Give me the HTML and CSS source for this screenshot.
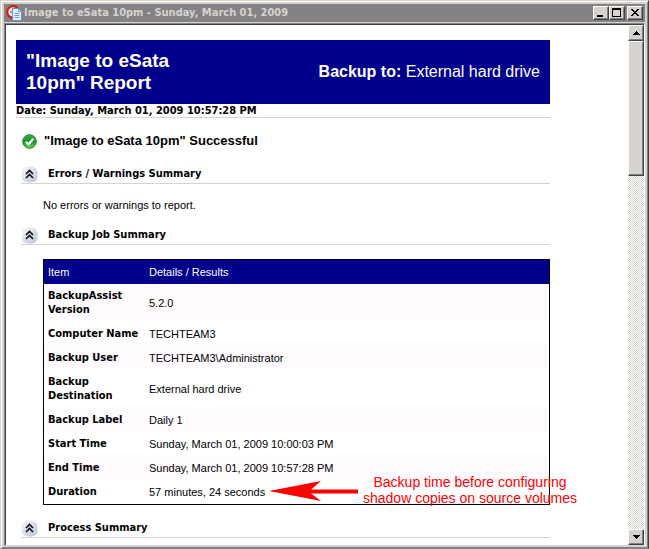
FILE: index.html
```html
<!DOCTYPE html>
<html lang="en">
<head>
<meta charset="utf-8">
<title>Image to eSata 10pm - Sunday, March 01, 2009</title>
<link rel="stylesheet" href="styles.css">
</head>
<body>
<svg class="defs" aria-hidden="true">
  <defs>
    <linearGradient id="disc" x1="0" y1="0" x2="1" y2="1">
      <stop offset="0" stop-color="#fafbfd"/>
      <stop offset="1" stop-color="#b9c0d8"/>
    </linearGradient>
    <linearGradient id="green" x1="0" y1="0" x2="0" y2="1">
      <stop offset="0" stop-color="#3dad45"/>
      <stop offset=".5" stop-color="#18942a"/>
      <stop offset="1" stop-color="#6fd84f"/>
    </linearGradient>
    <symbol id="collapse" viewBox="0 0 17 17">
      <rect x="0.5" y="0.5" width="16" height="16" rx="6" fill="url(#disc)"/>
      <path d="M5 8 8.500 4.500 12 8M5 12 8.500 8.500 12 12" fill="none" stroke="#111" stroke-width="1.600"/>
    </symbol>
  </defs>
</svg>
<div class="window">
  <header class="titlebar">
    <svg class="app-icon" viewBox="0 0 16 16" aria-hidden="true">
      <circle cx="7" cy="7" r="5.8" fill="#f6e9e7" stroke="#d31c12" stroke-width="2.2"/>
      <path d="M7 3v4H4" fill="none" stroke="#d33" stroke-width="1.2"/>
      <path d="M6.5 3.5h6l3 3v9h-9z" fill="#e6f1ff" stroke="#5d8fd6"/>
      <path d="M12.500 3.500v3h3M8.500 8.500h5M8.500 10.500h5M8.500 12.500h5" fill="none" stroke="#6f9de0"/>
    </svg>
    <h1 class="caption">Image to eSata 10pm - Sunday, March 01, 2009</h1>
    <div class="controls">
      <button class="bevel control" aria-label="Minimize"><svg viewBox="0 0 12 10"><path d="M2 7h6v2H2z"/></svg></button>
      <button class="bevel control" aria-label="Maximize"><svg viewBox="0 0 12 10"><path d="M1 0h9v9H1zM2 2v6h7V2z" fill-rule="evenodd"/></svg></button>
      <button class="bevel control close" aria-label="Close"><svg viewBox="0 0 12 10"><path d="M2 1h2v1h1v1h2V2h1V1h2v1H9v1H8v1H7v1h1v1h1v1h1v1H8V7H7V6H5v1H4v1H2V7h1V6h1V5h1V4H4V3H3V2H2z"/></svg></button>
    </div>
  </header>
  <div class="viewport">
    <main class="report">
      <div class="banner">
        <h2 class="report-title">"Image to eSata 10pm" Report</h2>
        <p class="target"><b>Backup to:</b> External hard drive</p>
      </div>
      <p class="date">Date: Sunday, March 01, 2009 10:57:28 PM</p>
      <p class="status">
        <svg class="check" viewBox="0 0 15 15" aria-hidden="true">
          <circle cx="7.500" cy="7.500" r="6.800" fill="url(#green)" stroke="#17862a"/>
          <path d="M3.800 7.800 6.500 10.300 11.400 4.800" fill="none" stroke="#fff" stroke-width="2.200"/>
        </svg>
        "Image to eSata 10pm" Successful
      </p>
      <section>
        <h3 class="section-title"><button class="toggle" aria-label="Collapse errors and warnings"><svg><use href="#collapse"/></svg></button>Errors / Warnings Summary</h3>
        <p class="note">No errors or warnings to report.</p>
      </section>
      <section>
        <h3 class="section-title"><button class="toggle" aria-label="Collapse job summary"><svg><use href="#collapse"/></svg></button>Backup Job Summary</h3>
        <table class="summary">
          <thead><tr><th class="item">Item</th><th>Details / Results</th></tr></thead>
          <tbody>
            <tr><th>BackupAssist Version</th><td>5.2.0</td></tr>
            <tr><th>Computer Name</th><td>TECHTEAM3</td></tr>
            <tr><th>Backup User</th><td>TECHTEAM3\Administrator</td></tr>
            <tr><th>Backup Destination</th><td>External hard drive</td></tr>
            <tr><th>Backup Label</th><td>Daily 1</td></tr>
            <tr><th>Start Time</th><td>Sunday, March 01, 2009 10:00:03 PM</td></tr>
            <tr><th>End Time</th><td>Sunday, March 01, 2009 10:57:28 PM</td></tr>
            <tr><th>Duration</th><td class="duration">57 minutes, 24 seconds
              <div class="callout">
                <svg class="arrow" viewBox="0 0 89 20" aria-hidden="true"><path d="M0 10 52 0 42 8.500H89V12.500H42L52 20z" fill="#f00"/></svg>
                <span class="callout-text">Backup time before configuring<br>shadow copies on source volumes</span>
              </div></td></tr>
          </tbody>
        </table>
      </section>
      <section>
        <h3 class="section-title"><button class="toggle" aria-label="Collapse process summary"><svg><use href="#collapse"/></svg></button>Process Summary</h3>
      </section>
    </main>
    <div class="scrollbar">
      <button class="bevel step" aria-label="Scroll up"><svg viewBox="0 0 7 4"><path d="M3 0h1v1h1v1h1v1h1v1H0V3h1V2h1V1h1z"/></svg></button>
      <div class="bevel thumb"></div>
      <button class="bevel step down" aria-label="Scroll down"><svg viewBox="0 0 7 4"><path d="M0 0h7v1H6v1H5v1H4v1H3V3H2V2H1V1H0z"/></svg></button>
    </div>
  </div>
</div>
</body>
</html>
```
FILE: styles.css
```css
* { box-sizing: border-box; }

body {
  margin: 0;
  font: 11px/14px "Liberation Sans", Arial, sans-serif;
  color: #000;
}

h1, h2, h3, p { margin: 0; }
.defs { position: absolute; width: 0; height: 0; }

.window {
  display: flex;
  flex-direction: column;
  height: 100vh;
  padding: 3px 3px 2px;
  background: #d6d3ce;
  border: 1px solid #d6d3ce;
  border-right-color: #424142;
  border-bottom-color: #848284;
  box-shadow: inset 1px 1px #fff, inset -1px -1px #848284;
}

.titlebar {
  display: flex;
  flex: none;
  align-items: center;
  height: 18px;
  padding: 0 2px;
  background: #848284;
}

.app-icon { width: 16px; height: 16px; }

.caption {
  flex: 1;
  margin-left: 2px;
  font: bold 11px/14px "DejaVu Sans Condensed", "DejaVu Sans", sans-serif;
  color: #d6d3ce;
}

.controls { display: flex; }

.bevel {
  padding: 0;
  background: #d6d3ce;
  border: 1px solid #fff;
  border-right-color: #424142;
  border-bottom-color: #424142;
  box-shadow: inset -1px -1px #848284;
}

.control { width: 16px; height: 14px; }
.control svg { display: block; width: 12px; height: 10px; margin: 1px; }
.close { margin-left: 2px; }

.viewport {
  display: flex;
  flex: 1;
  min-height: 0;
  margin-top: 1px;
  background: #fff;
  border: 1px solid #848284;
  border-right-color: #fff;
  border-bottom-color: #d6d3ce;
  box-shadow: inset 1px 1px #424142;
}

.report {
  flex: 1;
  min-width: 0;
  padding: 16px 78px 0 11px;
  overflow: hidden;
}

.banner {
  display: flex;
  align-items: center;
  justify-content: space-between;
  height: 64px;
  padding: 0 10px;
  color: #fff;
  background: #00008c;
}

.report-title { max-width: 190px; font-size: 19px; line-height: 22px; }
.target { font-size: 16px; line-height: 20px; }

.date {
  font: bold 11px/13px "DejaVu Sans Condensed", "DejaVu Sans", sans-serif;
  border-bottom: 1px solid #d6d3ce;
}

.status {
  display: flex;
  align-items: center;
  gap: 7px;
  margin: 15px 0 0 6px;
  font-size: 13px;
  font-weight: bold;
  line-height: 16px;
}

.check { width: 15px; height: 15px; }

.section-title {
  display: flex;
  align-items: center;
  gap: 10px;
  height: 19px;
  margin: 14px 0 0 5px;
  font: bold 11px/14px "DejaVu Sans Condensed", "DejaVu Sans", sans-serif;
  border-bottom: 1px solid #d6d3ce;
}

.status + section { margin-top: 16px; }
.status + section .section-title { margin-top: 0; }

.toggle { width: 17px; height: 17px; padding: 0; background: none; border: 0; }
.toggle svg { display: block; width: 17px; height: 17px; }

.note { margin: 14px 0 0 27px; }

.summary {
  width: calc(100% - 27px);
  margin: 14px 0 0 27px;
  border: 1px solid #000;
  border-spacing: 0;
}

.summary th, .summary td { padding: 5px 4px; text-align: left; vertical-align: middle; }
.summary thead th { color: #fff; font-weight: normal; background: #00008c; }
.summary .item { width: 101px; }
.summary tbody th { font: bold 11px/14px "DejaVu Sans Condensed", "DejaVu Sans", sans-serif; }
.summary tbody tr:nth-child(odd) { background: #fffbff; }
.summary tbody tr:last-child { background: #fff; }

.duration { position: relative; }

.callout {
  position: absolute;
  top: -6px;
  left: 124px;
  display: flex;
  align-items: center;
  gap: 5px;
  color: #f00;
}

.arrow { flex: none; width: 89px; height: 20px; margin-top: 2px; }
.callout-text { font-size: 14px; line-height: 16px; text-align: center; white-space: nowrap; }

.scrollbar {
  display: flex;
  flex: none;
  flex-direction: column;
  width: 16px;
  margin-top: 1px;
  background: repeating-conic-gradient(#d6d3ce 0 25%, #fff 0 50%) 0 0 / 2px 2px;
}

.step { flex: none; height: 16px; }
.step svg { display: block; width: 7px; height: 4px; margin: 0 auto; }
.thumb { height: 26%; }
.down { margin-top: auto; }
```
